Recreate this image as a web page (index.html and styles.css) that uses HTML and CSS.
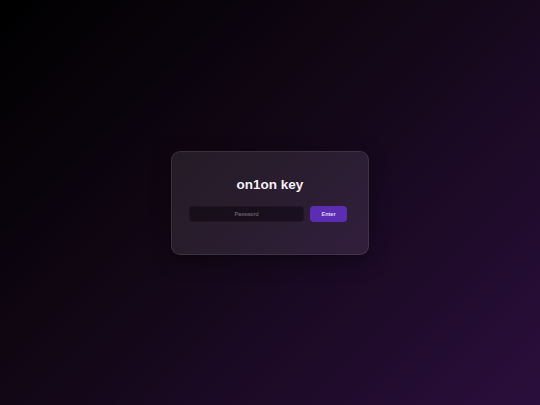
FILE: index.html
```html
<!DOCTYPE html>
<html lang="en">
<head>
<meta charset="utf-8">
<title>on1on key</title>
<link rel="stylesheet" href="styles.css">
</head>
<body>
<main class="page">
  <form class="card">
    <h1 class="title">on1on key</h1>
    <div class="row">
      <input class="field" type="password" placeholder="Password">
      <button class="btn" type="button">Enter</button>
    </div>
  </form>
</main>
</body>
</html>
```
FILE: styles.css
```css
html, body {
  margin: 0;
  padding: 0;
  height: 100%;
}
body {
  background: linear-gradient(135deg, #000000 0%, #120716 45%, #2a0e3c 100%);
  font-family: "Liberation Sans", Arial, sans-serif;
}
.page {
  min-height: 100vh;
  display: flex;
  align-items: center;
  justify-content: center;
}
.card {
  box-sizing: border-box;
  width: 198px;
  height: 104px;
  padding: 24px 17px 32px 17px;
  border-radius: 9px;
  background: linear-gradient(135deg, rgba(255,255,255,0.09), rgba(235,200,255,0.11));
  border: 1px solid rgba(255,255,255,0.09);
  box-shadow: 0 6px 20px rgba(0,0,0,0.35);
  display: flex;
  flex-direction: column;
  align-items: stretch;
}
.title {
  margin: 0 0 13px 0;
  font-size: 13.5px;
  line-height: 17px;
  font-weight: 700;
  color: #f4f0f6;
  text-align: center;
}
.row {
  display: flex;
  gap: 6px;
  margin-right: 4px;
  height: 16px;
}
.field {
  flex: 1;
  min-width: 0;
  box-sizing: border-box;
  height: 16px;
  border: 1px solid rgba(255,255,255,0.03);
  border-radius: 4px;
  background: rgba(10,5,14,0.55);
  color: #ddd;
  font-family: "Liberation Sans", Arial, sans-serif;
  font-size: 5.5px;
  text-align: center;
  padding: 0 4px;
  outline: none;
}
.field::placeholder {
  color: #7e7683;
}
.btn {
  width: 37px;
  height: 16px;
  box-sizing: border-box;
  border: none;
  border-radius: 4px;
  background: #5c2db2;
  color: #e2d8f4;
  font-family: "Liberation Sans", Arial, sans-serif;
  font-size: 5.5px;
  font-weight: 700;
  padding: 0;
  cursor: pointer;
}
```
